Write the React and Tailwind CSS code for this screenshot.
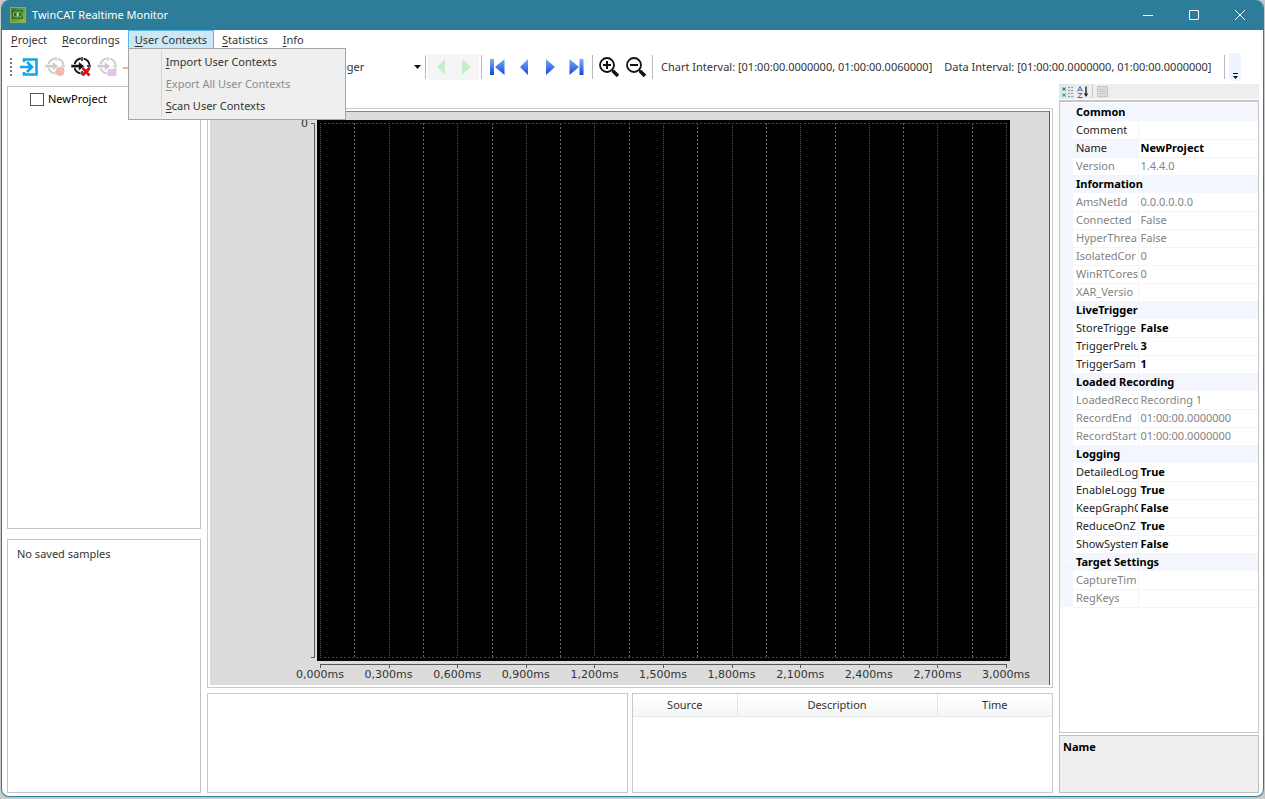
import React, { useState } from 'react';

const menus = ['Project', 'Recordings', 'User Contexts', 'Statistics', 'Info'];

const contextItems = [
  { label: 'Import User Contexts' },
  { label: 'Export All User Contexts', disabled: true },
  { label: 'Scan User Contexts' },
];

const properties = [
  {
    category: 'Common',
    rows: [
      { name: 'Comment', value: '' },
      { name: 'Name', value: 'NewProject', selected: true },
      { name: 'Version', value: '1.4.4.0', readOnly: true },
    ],
  },
  {
    category: 'Information',
    rows: [
      { name: 'AmsNetId', value: '0.0.0.0.0.0', readOnly: true },
      { name: 'Connected', value: 'False', readOnly: true },
      { name: 'HyperThrea', value: 'False', readOnly: true },
      { name: 'IsolatedCor', value: '0', readOnly: true },
      { name: 'WinRTCores', value: '0', readOnly: true },
      { name: 'XAR_Versio', value: '', readOnly: true },
    ],
  },
  {
    category: 'LiveTrigger',
    rows: [
      { name: 'StoreTrigge', value: 'False' },
      { name: 'TriggerPrelu', value: '3' },
      { name: 'TriggerSam', value: '1' },
    ],
  },
  {
    category: 'Loaded Recording',
    rows: [
      { name: 'LoadedReco', value: 'Recording 1', readOnly: true },
      { name: 'RecordEnd', value: '01:00:00.0000000', readOnly: true },
      { name: 'RecordStart', value: '01:00:00.0000000', readOnly: true },
    ],
  },
  {
    category: 'Logging',
    rows: [
      { name: 'DetailedLog', value: 'True' },
      { name: 'EnableLogg', value: 'True' },
      { name: 'KeepGraphO', value: 'False' },
      { name: 'ReduceOnZ', value: 'True' },
      { name: 'ShowSystem', value: 'False' },
    ],
  },
  {
    category: 'Target Settings',
    rows: [
      { name: 'CaptureTim', value: '', readOnly: true },
      { name: 'RegKeys', value: '', readOnly: true },
    ],
  },
];

const ticks = ['0,000', '0,300', '0,600', '0,900', '1,200', '1,500', '1,800', '2,100', '2,400', '2,700', '3,000'];

const Mnemonic = ({ text }) => (
  <span>
    <span className="underline underline-offset-2">{text[0]}</span>
    {text.slice(1)}
  </span>
);

const AppLogo = () => (
  <svg width="16" height="16" viewBox="0 0 16 16">
    <defs>
      <linearGradient id="logoFill" x1="0" y1="0" x2="1" y2="1">
        <stop offset="0" stopColor="#3d7a2c" />
        <stop offset="1" stopColor="#8fc23a" />
      </linearGradient>
    </defs>
    <rect x="0.5" y="0.5" width="15" height="15" fill="url(#logoFill)" stroke="#8fae5c" />
    <rect x="2" y="3" width="11" height="9" rx="1" fill="#2f6a2c" />
    <circle cx="6" cy="7.5" r="2.8" fill="none" stroke="#8cc472" />
    <circle cx="9.5" cy="7.5" r="2.8" fill="none" stroke="#8cc472" />
    <rect x="7" y="6" width="1.5" height="3" fill="#b5dc96" />
  </svg>
);

/* Round target with an arrow going in, the badge tells the action */
const TargetIcon = ({ badge, faded }) => (
  <svg width="22" height="22" viewBox="0 0 22 22">
    <g opacity={faded ? 0.22 : 1}>
      <circle cx="12" cy="10" r="7.6" fill="none" stroke="#111" strokeWidth="1.8" strokeDasharray="9.1 2.84" strokeDashoffset="-1.4" />
      <path d="M12 1v4M12 15v4M17 10h4" stroke="#111" strokeWidth="1.4" />
      <path d="M1 8.6h7.500V5.500l6 4.700-6 4.700v-3.200H1z" fill="#111" stroke="#fff" strokeWidth="0.6" />
    </g>
    {badge === 'record' && <circle cx="16" cy="15.5" r="4.5" fill="#f5b9ad" />}
    {badge === 'delete' && <path d="M12.500 12l7 7.500M19.500 12l-7 7.500" stroke="#d3161c" strokeWidth="2.6" />}
    {badge === 'save' && <path d="M12 13h8.500v7H12z" fill="#e3c3ea" />}
  </svg>
);

const ConnectIcon = () => (
  <svg width="18" height="18" viewBox="0 0 18 18" fill="none" stroke="#13a4ec">
    <path d="M4 4V1.500h12.500v15H4V14" strokeWidth="2.6" />
    <path d="M0 9h11M7 4l5 5-5 5" strokeWidth="2.6" />
  </svg>
);

const ExportIcon = () => (
  <svg width="20" height="20" viewBox="0 0 20 20" fill="none" stroke="#e3a25c">
    <path d="M1 11h12M9 7l4 4-4 4" strokeWidth="1.5" />
  </svg>
);

const NavIcon = ({ kind }) => (
  <svg width="18" height="18" viewBox="0 0 18 18">
    <defs>
      <linearGradient id="navBlue" x1="0" y1="0" x2="0" y2="1">
        <stop offset="0" stopColor="#7eabf8" />
        <stop offset="1" stopColor="#1148dc" />
      </linearGradient>
    </defs>
    {kind === 'first' && <path d="M1 1h4v16H1zM15.500 1v16L6 9z" fill="url(#navBlue)" />}
    {kind === 'prev' && <path d="M13 1v16L5 9z" fill="url(#navBlue)" />}
    {kind === 'next' && <path d="M5 1v16l9-8z" fill="url(#navBlue)" />}
    {kind === 'last' && <path d="M2.500 1v16L12 9zM12.500 1h4v16h-4z" fill="url(#navBlue)" />}
    {kind === 'triggerPrev' && <path d="M13 1v16L5 9z" fill="#c3f0c9" />}
    {kind === 'triggerNext' && <path d="M5 1v16l9-8z" fill="#c3f0c9" />}
  </svg>
);

const ZoomIcon = ({ plus }) => (
  <svg width="20" height="20" viewBox="0 0 20 20" fill="none" stroke="#111">
    <circle cx="8" cy="8" r="7" strokeWidth="1.8" />
    <path d="M13 13l2 2" strokeWidth="2" />
    <path d="M14 14l5 5" strokeWidth="3.4" />
    <path d={plus ? 'M4 8h8M8 4v8' : 'M4 8h8'} strokeWidth="2" />
  </svg>
);

const Separator = () => <div className="h-6 w-px shrink-0 bg-[#b5bac2]" />;

const TimeChart = () => {
  const left = 110;
  const step = 68.6;
  const xAt = (i) => Math.round(left + i * step) + 0.5;
  return (
    <svg className="block h-full w-full" viewBox="0 0 839 573" preserveAspectRatio="none">
      <rect x="107" y="8" width="693" height="541" fill="#000" />
      {ticks.map((t, i) => (
        <g key={t}>
          <line x1={xAt(i)} x2={xAt(i)} y1="11" y2="545" stroke="#525252" strokeDasharray="1 1" />
          {i < 10 && (
            <line x1={xAt(i + 0.5)} x2={xAt(i + 0.5)} y1="11" y2="545" stroke="#6c6c6c" strokeDasharray="2 2" />
          )}
          <line x1={xAt(i)} x2={xAt(i)} y1="552" y2="556" stroke="#555" />
          <text x={left + i * step} y="566" textAnchor="middle" fontSize="11" fontFamily="DejaVu Sans, sans-serif" fill="#333">
            {t}ms
          </text>
        </g>
      ))}
      <path d="M110 11.500H797M110 545.500H797" stroke="#444" strokeDasharray="2 2" />
      <path d="M110 552.500H797M101 11.500h3.500V545.500H101" fill="none" stroke="#555" />
      <text x="98" y="15" textAnchor="end" fontSize="11" fontFamily="DejaVu Sans, sans-serif" fill="#333">0</text>
    </svg>
  );
};

const PropertyGrid = () => (
  <table className="w-full table-fixed border-collapse">
    <colgroup>
      <col className="w-[13px]" />
      <col className="w-[65px]" />
      <col />
    </colgroup>
    {properties.map((group) => (
      <tbody key={group.category}>
        <tr className="h-[18px] bg-[#f3f6fc]">
          <td>
            <svg width="13" height="8" viewBox="0 0 13 8" fill="none" stroke="#fff">
              <path d="M4 2l3 3 3-3" />
            </svg>
          </td>
          <th colSpan={2} className="pl-[3px] text-left font-bold text-black">{group.category}</th>
        </tr>
        {group.rows.map((row) => (
          <tr key={row.name} className={`h-[18px] ${row.readOnly ? 'text-[#838383]' : 'text-[#222]'}`}>
            <td className="bg-[#f3f6fc]" />
            <td className={`border-r border-b border-[#f3f5fa] pl-[3px] ${row.selected ? 'bg-[#f3f6fc]' : ''}`}>
              <div className="overflow-hidden whitespace-nowrap">{row.name}</div>
            </td>
            <td className={`overflow-hidden border-b border-[#f3f5fa] pl-[2px] whitespace-nowrap ${row.readOnly ? '' : 'font-bold text-black'}`}>{row.value}</td>
          </tr>
        ))}
      </tbody>
    ))}
  </table>
);

const App = () => {
  const [openMenu, setOpenMenu] = useState('User Contexts');
  const [checked, setChecked] = useState(false);

  return (
    <div className="h-screen bg-[#c9c9c9] px-px pb-[2px] font-['Noto_Sans',sans-serif] text-[11px] leading-4 text-[#333]">
      <div className="flex h-full flex-col overflow-hidden rounded-lg border border-t-0 border-[#2d7d9a] bg-white">
        {/* title bar */}
        <header className="flex h-[30px] shrink-0 items-center bg-[#2d7d9a] pl-2 text-white">
          <AppLogo />
          <h1 className="flex-1 pl-[6px]">TwinCAT Realtime Monitor</h1>
          <button aria-label="Minimize" className="flex w-[46px] justify-center">
            <svg width="10" height="10" stroke="#fff"><path d="M0 5.500h10" /></svg>
          </button>
          <button aria-label="Maximize" className="flex w-[46px] justify-center">
            <svg width="10" height="10" fill="none" stroke="#fff"><rect x="0.5" y="0.5" width="9" height="9" rx="0.5" /></svg>
          </button>
          <button aria-label="Close" className="flex w-[46px] justify-center">
            <svg width="10" height="10" stroke="#fff"><path d="M0 0l10 10M10 0L0 10" /></svg>
          </button>
        </header>

        {/* menu */}
        <nav className="flex h-[19px] shrink-0 gap-px pl-[2px]">
          {menus.map((m) => (
            <div key={m} className="relative">
              <button
                onClick={() => setOpenMenu(openMenu === m ? '' : m)}
                className={`h-[19px] border px-[6px] ${openMenu === m ? 'border-[#5cb8e4] bg-[#cce8f6]' : 'border-transparent'}`}
              >
                <Mnemonic text={m} />
              </button>
              {m === 'User Contexts' && openMenu === m && (
                <div className="absolute top-[18px] left-0 z-10 w-[218px] border border-[#a5a5a5] bg-[#efefef] py-[2px]">
                  <div className="ml-8 flex flex-col border-l border-[#d5d5d5]">
                    {contextItems.map((item) => (
                      <button key={item.label} disabled={item.disabled} className="h-[22px] pl-1 text-left disabled:text-[#8c8c8c]">
                        <Mnemonic text={item.label} />
                      </button>
                    ))}
                  </div>
                </div>
              )}
            </div>
          ))}
        </nav>

        {/* tool bar */}
        <div className="flex h-[35px] shrink-0 items-center">
          <div className="ml-2 h-[18px] border-l-2 border-dotted border-[#777]" />
          <div className="ml-2 flex items-center gap-1">
            <button aria-label="Connect" className="mr-[2px]"><ConnectIcon /></button>
            <button aria-label="Start recording"><TargetIcon badge="record" faded /></button>
            <button aria-label="Delete recording"><TargetIcon badge="delete" /></button>
            <button aria-label="Save recording"><TargetIcon badge="save" faded /></button>
            <button aria-label="Export recording"><ExportIcon /></button>
          </div>
          <div className="relative ml-[185px] flex w-[98px] items-center">
            <select aria-label="Trigger" className="w-full appearance-none bg-transparent">
              <option>Trigger</option>
            </select>
            <svg className="pointer-events-none absolute right-1" width="7" height="4"><path d="M0 0h7L3.500 4z" fill="#111" /></svg>
          </div>
          <Separator />
          <div className="mx-[2px] flex h-[26px] items-center gap-[7px] bg-[#f5f5f5] px-1">
            <button disabled aria-label="Previous trigger"><NavIcon kind="triggerPrev" /></button>
            <button disabled aria-label="Next trigger"><NavIcon kind="triggerNext" /></button>
          </div>
          <Separator />
          <div className="flex gap-2 px-[7px]">
            <button aria-label="First"><NavIcon kind="first" /></button>
            <button aria-label="Previous"><NavIcon kind="prev" /></button>
            <button aria-label="Next"><NavIcon kind="next" /></button>
            <button aria-label="Last"><NavIcon kind="last" /></button>
          </div>
          <Separator />
          <div className="flex gap-[7px] px-[6px]">
            <button aria-label="Zoom in"><ZoomIcon plus /></button>
            <button aria-label="Zoom out"><ZoomIcon /></button>
          </div>
          <Separator />
          <span className="pl-2 whitespace-nowrap">Chart Interval: [01:00:00.0000000, 01:00:00.0060000]</span>
          <span className="pl-3 whitespace-nowrap">Data Interval: [01:00:00.0000000, 01:00:00.0000000]</span>
          <div className="mr-1 ml-auto"><Separator /></div>
          <button aria-label="Toolbar options" className="mr-[22px] flex h-7 w-[12px] items-end justify-center rounded-sm bg-[#eef4fd] pb-[2px]">
            <svg width="5" height="6"><path d="M0 0h5v1H0zM0 3h5L2.500 6z" fill="#111" /></svg>
          </button>
        </div>

        {/* work area */}
        <main className="flex min-h-0 flex-1 pr-[4px] pb-[3px] pl-[5px]">
          <aside className="flex w-[194px] shrink-0 flex-col gap-[10px] pt-[2px]">
            <section className="flex-1 border border-[#c3c3c3]">
              <label className="flex items-center gap-1 pt-1 pl-[22px] text-black">
                <input
                  type="checkbox"
                  checked={checked}
                  onChange={() => setChecked(!checked)}
                  className="h-[13px] w-[14px] appearance-none border border-[#555] bg-white checked:bg-[#2d7d9a]"
                />
                NewProject
              </label>
            </section>
            <section className="h-[254px] shrink-0 border border-[#c3c3c3] px-[9px] pt-[6px]">No saved samples</section>
          </aside>

          <div className="flex min-w-0 flex-1 flex-col gap-[5px] px-[6px] pt-6">
            <section className="min-h-0 flex-1 border border-[#c9c9c9] p-[2px]">
              <div className="h-full border-t border-r border-t-[#858585] border-r-[#555] bg-[#dcdcdc]">
                <TimeChart />
              </div>
            </section>
            <div className="flex h-[100px] shrink-0 gap-[4px]">
              <section className="flex-1 border border-[#c9c9c9]" />
              <section className="flex-1 border border-[#c9c9c9]">
                <table className="w-full table-fixed">
                  <thead>
                    <tr className="h-[22px] bg-linear-to-b from-white to-[#f5f7f7]">
                      <th className="w-[104px] border-r border-b border-[#e3e6e6] font-normal">Source</th>
                      <th className="w-[200px] border-r border-b border-[#e3e6e6] font-normal">Description</th>
                      <th className="border-b border-[#e3e6e6] font-normal">Time</th>
                    </tr>
                  </thead>
                </table>
              </section>
            </div>
          </div>

          <aside className="flex w-[200px] shrink-0 flex-col">
            <div className="flex h-[15px] shrink-0 items-center bg-[#eee]">
              <button aria-label="Categorized" className="flex h-full w-[15px] items-center justify-center bg-[#e2e8ea]">
                <svg width="12" height="12" viewBox="0 0 12 12">
                  <path d="M1 1h4v4H1zM1 7h4v4H1z" fill="#8fd0cb" />
                  <path d="M2 3h2M3 2v2M2 9h2" stroke="#27605c" />
                  <path d="M7 1.500h2M10 1.500h2M7 4.500h2M10 4.500h2M7 7.500h2M10 7.500h2M7 10.500h2M10 10.500h2" stroke="#7f9fb8" />
                </svg>
              </button>
              <button aria-label="Alphabetical" className="flex w-[18px] justify-center">
                <svg width="12" height="12" viewBox="0 0 12 12" fill="none">
                  <path d="M0.500 5.500L3 0.500l2.500 5M1.500 4h3" stroke="#3c72c4" />
                  <path d="M1 7.500h4L1 11.500h4.500" stroke="#a54d56" />
                  <path d="M9 0.500v9" stroke="#222" strokeWidth="1.4" />
                  <path d="M6.800 7.500h4.400L9 11z" fill="#222" />
                </svg>
              </button>
              <div className="mr-1 h-[13px] w-px bg-[#c8c8c8]" />
              <button disabled aria-label="Property pages">
                <svg width="11" height="11" viewBox="0 0 11 11">
                  <rect x="0.5" y="0.5" width="10" height="10" fill="#ddd" stroke="#c5c5c5" />
                  <path d="M2 3.500h7M2 5.500h7M2 7.500h7" stroke="#c9c9c9" />
                </svg>
              </button>
            </div>
            <section className="mt-px min-h-0 flex-1 border border-t-2 border-[#c6c6c6] pt-px">
              <PropertyGrid />
            </section>
            <section className="mt-[2px] h-[58px] shrink-0 border border-[#c0c0c0] bg-[#efefef] px-[3px] pt-[3px] font-bold text-black">Name</section>
          </aside>
        </main>
      </div>
    </div>
  );
};

export default App;
